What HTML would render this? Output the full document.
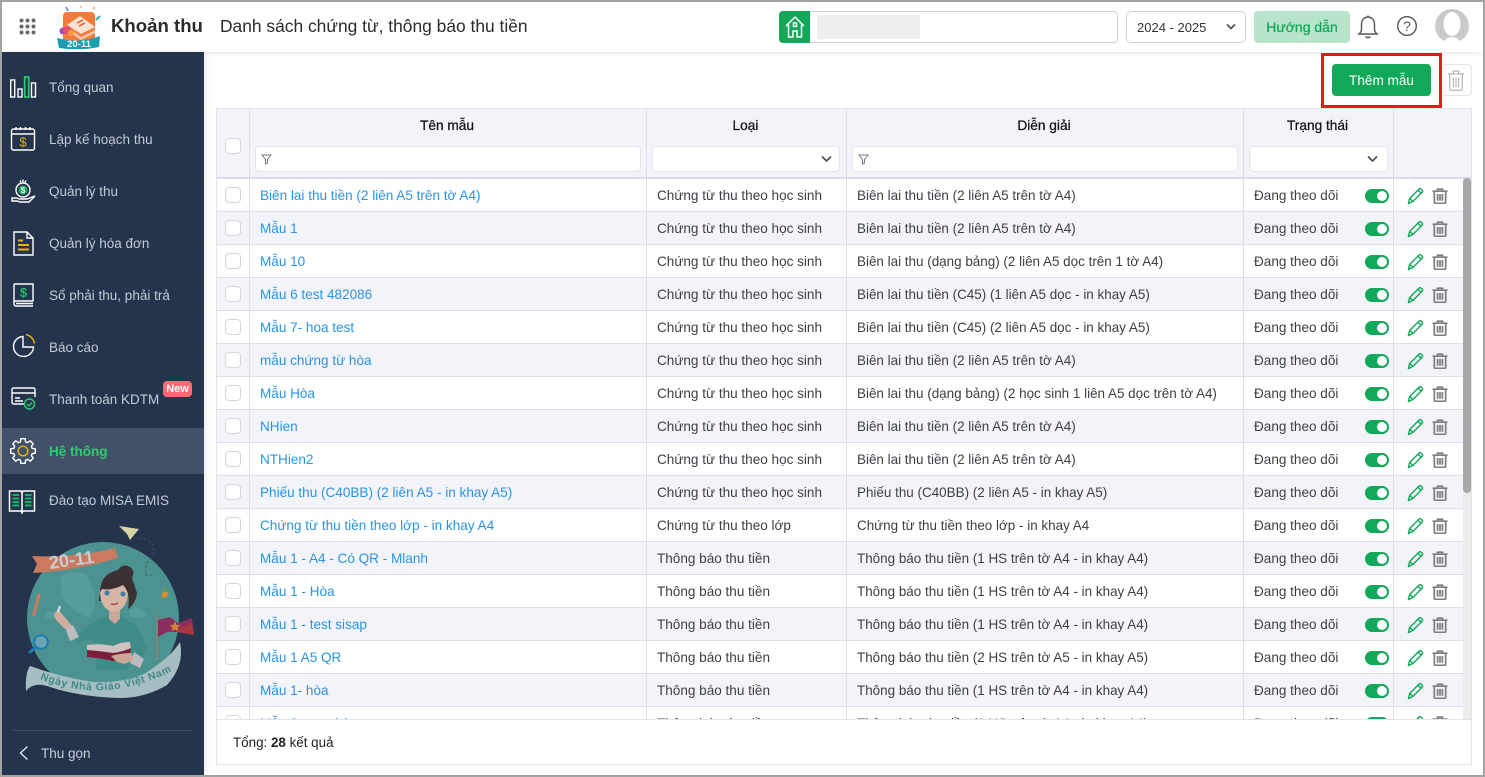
<!DOCTYPE html>
<html lang="vi"><head><meta charset="utf-8"><title>Khoản thu</title>
<style>
*{box-sizing:border-box}
html,body{margin:0;padding:0;width:1485px;height:777px;overflow:hidden;background:#fff}
body{font-family:"Liberation Sans","Noto Sans CJK SC",sans-serif;font-size:13px;color:#333;position:relative}
.a{position:absolute}
.frame{left:0;top:0;width:1485px;height:777px;border:2px solid #a3a3a3;pointer-events:none;z-index:50}
.hdr{left:2px;top:2px;width:1481px;height:50px;background:#fff;box-shadow:0 1px 5px rgba(0,0,0,.1);z-index:5}
.side{left:2px;top:52px;width:202px;height:723px;background:#24344d;box-shadow:2px 0 6px rgba(0,0,0,.08);z-index:6}
.mi{position:absolute;left:47px;color:#c3cbd4;font-size:13.5px;line-height:22px;white-space:nowrap}
.ic{position:absolute;fill:none;stroke:#fff;stroke-width:1.4}
.inp{background:#fff;border:1px solid #e3e5ea;border-radius:4px}
.th{background:#f3f4f9;border-right:1px solid #dcdfe8;border-bottom:2px solid #dcdfe8;top:109px;height:70px}
.tt{top:116px;text-align:center;color:#111;font-size:13.7px;line-height:19px;-webkit-text-stroke:.25px #111}
.cb{position:absolute;left:8px;width:16px;height:16px;background:#fff;border:1px solid #d4d6dc;border-radius:4px}
#body{left:217px;top:179px;width:1246px;height:540px;overflow:hidden}
.r{position:relative;height:33px;border-bottom:1px solid #dcdfe8;line-height:34px;white-space:nowrap;background:#fff}
.r:nth-child(even){background:#f3f4f9}
.r span{position:absolute;top:0;font-size:13.55px;color:#3c3f45}
.r .n{left:43px;color:#2a93e6}.r .l{left:440px}.r .d{left:640px;font-size:13.45px}.r .s{left:1037px}
.r i{position:absolute;top:0;height:33px;width:1px;background:#dcdfe8}
.r b{position:absolute;left:1148px;top:10px;width:24px;height:14px;border-radius:7px;background:#12a85a}
.r b:after{content:"";position:absolute;right:2px;top:2px;width:10px;height:10px;border-radius:50%;background:#fff}
.r svg{position:absolute;top:0;left:0;width:1246px;height:33px;pointer-events:none}
</style></head><body>
<svg width="0" height="0" style="position:absolute"><defs>
<symbol id="pen" viewBox="0 0 18 18"><path d="M1.5 17 2.8 11.6 12.6 1.8q1-1 2.1-.3l1.4 1.3q.9 1 0 2.1L6.3 14.7ZM2.8 11.600 6.3 14.7M11.6 2.900 15 6" fill="none" stroke="#12a85a" stroke-width="1.5" stroke-linejoin="round"/></symbol>
<symbol id="tr" viewBox="0 0 16 16"><path d="M.5 3.200H15.500M5.500 3V1.200H10.500V3M2.300 3.500V14q0 1.300 1.300 1.300H12.400q1.300 0 1.300-1.300V3.500M5.600 6V12.800M8 6V12.800M10.400 6V12.800" fill="none" stroke="#7d7d7d" stroke-width="1.7"/></symbol>
</defs></svg>

<!-- header -->
<div class="a hdr"></div>
<svg class="a" style="left:18.5px;top:17.5px;z-index:7" width="18" height="18"><g fill="#6a6a6a"><circle cx="2.500" cy="2.500" r="2"/><circle cx="8.500" cy="2.500" r="2"/><circle cx="14.500" cy="2.500" r="2"/><circle cx="2.500" cy="8.500" r="2"/><circle cx="8.500" cy="8.500" r="2"/><circle cx="14.500" cy="8.500" r="2"/><circle cx="2.500" cy="14.500" r="2"/><circle cx="8.500" cy="14.500" r="2"/><circle cx="14.500" cy="14.500" r="2"/></g></svg>
<svg class="a" style="left:55px;top:5px;z-index:7" width="50" height="45" viewBox="0 0 50 45">
<rect x="8" y="7" width="32" height="31" rx="4" fill="#f47a3a"/>
<path d="M12 20 25 11 40 22 26 29Z" fill="#fbe3d4"/><path d="M13 23 26 32 40 25 40 28 26 35 14 27Z" fill="#f9c9ae"/>
<path d="M22 18l6-3M24 21l6-3" stroke="#e4572e" stroke-width="1.5"/>
<circle cx="8" cy="26" r="3.500" fill="#a04fb0"/><circle cx="12" cy="25" r="4" fill="#e5536b"/><circle cx="16" cy="28" r="3" fill="#f5a040"/>
<circle cx="39" cy="3" r="1.300" fill="#f3b98d"/><circle cx="26" cy="2" r="1" fill="#f3b98d"/><path d="M11 2l2 4" stroke="#3a8fc4" stroke-width="1.500"/><path d="M41 15l4-4" stroke="#2bb4c2" stroke-width="2"/>
<path d="M2 33 Q25 39 45 31 L44 42 Q25 46 4 43Z" fill="#1a9db0"/>
<text x="24" y="42" text-anchor="middle" font-family="Liberation Sans" font-size="9.5" font-weight="700" fill="#fff">20-11</text>
</svg>
<div class="a" style="left:111px;top:13px;font-size:18.6px;font-weight:700;color:#2b2b2b;line-height:26px;z-index:7;white-space:nowrap">Khoản thu</div>
<div class="a" style="left:220px;top:14px;font-size:17.4px;color:#2b2b2b;line-height:24px;z-index:7;white-space:nowrap">Danh sách chứng từ, thông báo thu tiền</div>

<div class="a" style="left:779px;top:11px;width:339px;height:32px;border:1px solid #cfd1d6;border-radius:4px;background:#fff;z-index:7"></div>
<div class="a" style="left:779px;top:11px;width:31px;height:32px;background:#12a85a;border-radius:4px 0 0 4px;z-index:8"></div>
<svg class="a" style="left:785px;top:15px;z-index:9" width="20" height="24" viewBox="0 0 20 24" fill="none" stroke="#fff" stroke-width="1.500"><path d="M1 11 10 2l9 9M3.500 9.500V22H8V16H12V22H16.500V9.500"/><rect x="8.500" y="8" width="3" height="3.500"/></svg>
<div class="a" style="left:817px;top:15px;width:103px;height:24px;background:#eeeeee;z-index:8"></div>
<div class="a" style="left:1126px;top:11px;width:120px;height:32px;border:1px solid #cfd1d6;border-radius:5px;background:#fff;z-index:7;line-height:32px;padding-left:10px;font-size:13px;color:#333;white-space:nowrap">2024 - 2025</div>
<svg class="a" style="left:1226px;top:23px;z-index:8" width="10" height="8"><path d="M1 1.500 5 5.500 9 1.500" fill="none" stroke="#444a5c" stroke-width="1.600"/></svg>
<div class="a" style="left:1254px;top:11px;width:96px;height:32px;border-radius:4px;background:#b7e4ca;color:#12a85a;text-align:center;line-height:33px;font-size:14px;-webkit-text-stroke:.25px #12a85a;z-index:7;white-space:nowrap">Hướng dẫn</div>
<svg class="a" style="left:1357px;top:14px;z-index:7" width="22" height="26" viewBox="0 0 22 26" fill="none" stroke="#555" stroke-width="1.4"><path d="M2 20q2.500-2 2.500-5V10a6.500 7 0 0 1 13 0v5q0 3 2.500 5ZM8.500 22.500q2.500 2.500 5 0M11 3V1.500"/></svg>
<svg class="a" style="left:1396px;top:15px;z-index:7" width="22" height="22" viewBox="0 0 22 22"><circle cx="11" cy="11" r="9.300" fill="none" stroke="#555" stroke-width="1.4"/><text x="11" y="16" text-anchor="middle" font-family="Liberation Sans" font-size="14" fill="#555">?</text></svg>
<svg class="a" style="left:1435px;top:9px;z-index:7" width="34" height="34" viewBox="0 0 34 34"><circle cx="17" cy="17" r="17" fill="#c9c9c9"/><ellipse cx="17" cy="15" rx="8.500" ry="12" fill="#fff"/><path d="M7 34q10-12 20 0Z" fill="#fff"/></svg>

<!-- sidebar -->
<div class="a side">
  <div class="a" style="left:0;top:376px;width:202px;height:46px;background:#42516a"></div>
  <div class="mi" style="top:25px">Tổng quan</div>
  <div class="mi" style="top:77px">Lập kế hoạch thu</div>
  <div class="mi" style="top:129px">Quản lý thu</div>
  <div class="mi" style="top:181px">Quản lý hóa đơn</div>
  <div class="mi" style="top:233px">Sổ phải thu, phải trả</div>
  <div class="mi" style="top:285px">Báo cáo</div>
  <div class="mi" style="top:337px">Thanh toán KDTM</div>
  <div class="mi" style="top:389px;color:#2ecc71;font-weight:700">Hệ thống</div>
  <div class="mi" style="top:438px">Đào tạo MISA EMIS</div>
  <div class="a" style="left:161px;top:329px;width:29px;height:16px;background:#ff6b70;border-radius:4px;color:#fff;font-size:11px;font-weight:700;text-align:center;line-height:16px">New</div>
  <div class="a" style="left:9px;top:678px;width:181px;height:1px;background:#3c4b64"></div>
  <svg class="a" style="left:16px;top:693px" width="12" height="16"><path d="M9.500 1.500 2.500 8l7 6.500" fill="none" stroke="#d5dbe2" stroke-width="1.500"/></svg>
  <div class="mi" style="left:39px;top:691px;color:#c9d1d9">Thu gọn</div>

  <!-- icons -->
  <svg class="ic" style="left:8px;top:24px" width="28" height="24"><rect x=".7" y="4" width="4" height="17"/><rect x="8" y="13" width="4" height="8"/><rect x="14.700" y="1" width="4" height="20" stroke="#2ecc71" stroke-width="1.700"/><rect x="21.500" y="7" width="4" height="14"/></svg>
  <svg class="ic" style="left:8px;top:74px" width="28" height="26"><rect x="1.500" y="3" width="23" height="21" rx="2"/><path d="M1.500 8H24.500M6 1v3M10.500 1v3M15.500 1v3M20 1v3"/><text x="13" y="20.500" text-anchor="middle" font-family="Liberation Sans" font-size="13" fill="#e6b00a" stroke="none">$</text></svg>
  <svg class="ic" style="left:8px;top:126px" width="28" height="28"><circle cx="13" cy="12" r="7"/><circle cx="13" cy="12" r="4.600" fill="#16a85c" stroke="none"/><path d="M13 1.500v2.500M10 2.500 11 4.500M16 2.500 15 4.500M2 20h4l4 1h7l8-3-6 6H10l-3-1H2Z"/><text x="13" y="15" text-anchor="middle" font-family="Liberation Sans" font-size="8" font-weight="700" fill="#fff" stroke="none">$</text></svg>
  <svg class="ic" style="left:9px;top:178px" width="26" height="28"><path d="M3 2H16L22 8V25H3ZM16 2V8H22"/><path d="M7 10.500H12M7 15H18M7 19.500H18" stroke="#e6b00a" stroke-width="2"/></svg>
  <svg class="ic" style="left:10px;top:230px" width="26" height="28"><path d="M2 22V3q0-1 1-1H21V19H4q-2 0-2 2.500T4 24H21M4 21.500H21"/><text x="11.500" y="15" text-anchor="middle" font-family="Liberation Sans" font-size="13" font-weight="700" fill="#12c46b" stroke="none">$</text></svg>
  <svg class="ic" style="left:10px;top:281px" width="26" height="26"><path d="M11 3.500A10 10 0 1 0 21.500 14H11Z"/><path d="M14 1.500a11 11 0 0 1 8.500 9" stroke="#e6b00a" stroke-width="1.500"/></svg>
  <svg class="ic" style="left:8px;top:334px" width="30" height="28"><path d="M14 18H4q-2 0-2-2V4q0-2 2-2H23q2 0 2 2V11M2 7H25M5 12H10M5 15H13"/><circle cx="19.500" cy="18" r="5" stroke="#2ecc71"/><path d="M17 18l2 2 3-3.500" stroke="#2ecc71"/></svg>
  <svg class="ic" style="left:7px;top:385px" width="28" height="28" viewBox="0 0 28 28"><g transform="translate(14 14)"><path stroke-linejoin="round" d="M-2.620-9.130-2.170-12.310 2.170-12.310 2.620-9.130 4.600-8.310 7.170-10.240 10.240-7.170 8.310-4.600 9.130-2.620 12.310-2.170 12.310 2.170 9.130 2.620 8.310 4.600 10.240 7.170 7.170 10.240 4.600 8.310 2.620 9.130 2.170 12.310-2.170 12.310-2.620 9.130-4.600 8.310-7.170 10.240-10.240 7.170-8.310 4.600-9.130 2.620-12.310 2.170-12.310-2.170-9.130-2.620-8.310-4.600-10.240-7.170-7.170-10.240-4.600-8.310Z"/><circle r="4.800" stroke="#e6b00a" stroke-width="1.500"/></g></svg>
  <svg class="ic" style="left:6px;top:436px" width="28" height="26"><path d="M1.500 3H13L14 5 15 3H26.500V23H15L14 25 13 23H1.500ZM14 5V23" stroke-width="1.500"/><path d="M4.500 7H11M4.500 10.500H11M4.500 14H11M4.500 17.500H11M17 7H23.500M17 10.500H23.500M17 14H23.500M17 17.500H23.500" stroke="#12c46b" stroke-width="1.700"/></svg>

  <!-- illustration -->
  <svg class="a" style="left:18px;top:473px" width="180" height="180" viewBox="0 0 180 180">
    <circle cx="83" cy="93" r="76" fill="#4b9290"/>
    <path d="M40 52q12-8 25-3 8 12 10 22t-6 22Q50 85 42 72ZM110 84q12-4 18 7-8 3-18 1ZM25 88q10-4 16 4-8 4-16 0Z" fill="#569c9a"/>
    <path d="M99 1 119 4 110 15 107 9Z" fill="#d8d3a5"/><path d="M118 13q16 2 16 11t-8 14l-1 12 8 0" fill="none" stroke="#3d5a5a" stroke-dasharray="3 2" stroke-width=".8"/>
    <path d="M12 31Q55 33 95 23L98 33Q55 46 13 48L17 39Z" fill="#c97a5f"/>
    <text transform="translate(30 44) rotate(-8)" font-family="Liberation Sans" font-size="18" font-weight="700" fill="#c9cdd3">20-11</text>
    <path d="M53 112 80 93 90 91H100L117 100 127 123 122 137 110 132 108 144H75L80 122 70 113 58 118Z" fill="#3f8d88"/>
    <path d="M45 102 53 100 59 112 50 116ZM114 127 124 134 120 143 110 138Z" fill="#bcbcc0"/>
    <path d="M34 90q2-6 6-3l2 2 10 12-7 3-9-9Z" fill="#cfae9f"/><path d="M38 87 40 81" stroke="#d8d8d8" stroke-width="2.500"/>
    <path d="M89 84h11v10l-5 5-6-5Z" fill="#c9a797"/>
    <ellipse cx="94" cy="68" rx="14" ry="19" fill="#d6b5a5"/>
    <path d="M81 76Q76 50 98 45q4-6 10-4 8 3 4 12 4 12 5 15-1 10-9 16 3-16-5-24-12 6-21 4-3 4-3 12Z" fill="#3a2f31"/>
    <circle cx="87" cy="68" r="2.500" fill="#3a7fa8"/><circle cx="103" cy="69" r="2.500" fill="#3a7fa8"/><path d="M91 79q4 1 7-1" stroke="#a84a50" stroke-width="1.500" fill="none"/>
    <path d="M67 120q14-2 26 1 8-4 17-4l1 8q-10 2-18 3-14-2-26-2Z" fill="#cfc2c0"/>
    <path d="M67 125q14 1 26 3 9-1 18-5l-1 8q-10 5-17 5-13-3-26-4Z" fill="#7d1f3a"/>
    <path d="M91 131q10-3 20-3l3 6-9 5-8-2Z" fill="#cba898"/>
    <path d="M137 89V135" stroke="#b8746a" stroke-width="1"/>
    <path d="M138 95 150 92 158 98 172 93 174 110 157 107 147 107 138 112Z" fill="#8b2d5e"/>
    <path d="M157 104 172 98 174 110 157 107Z" fill="#a8363f"/>
    <path d="M155 96l1.500 4 4 0-3 2.500 1 4-3.500-2.200-3.500 2.200 1-4-3-2.500 4 0Z" fill="#d4853a"/>
    <path d="M12 90 18 68 21 69 15 91Z" fill="#c97a5f"/>
    <circle cx="21" cy="117" r="6.800" fill="#6da5b0" stroke="#1f7ab8" stroke-width="2"/><path d="M16 122 9 128" stroke="#1f7ab8" stroke-width="3"/>
    <path d="M143 66 149 68 146 73 141 72Z" fill="#d2902f"/><path d="M145 66V61M147 67l2-4" stroke="#5c9a68" stroke-width="1.500"/>
    <path d="M6 166Q5 148 10 141 40 152 73 157 115 158 133 143 152 130 160 117 165 140 147 160 125 173 100 173 60 172 30 162 14 156 6 166Z" fill="#a6bdc2"/>
    <path id="rb" d="M20 154Q85 180 152 146" fill="none" stroke="none"/>
    <text font-family="Liberation Sans" font-size="10.500" font-weight="700" fill="#3f8a86" letter-spacing=".65"><textPath href="#rb">Ngày Nhà Giáo Việt Nam</textPath></text>
  </svg>
</div>

<!-- toolbar -->
<div class="a" style="left:1332px;top:64px;width:99px;height:32px;background:#12a85a;border-radius:4px;color:#fff;text-align:center;line-height:33px;font-size:13.6px;z-index:7;white-space:nowrap">Thêm mẫu</div>
<div class="a" style="left:1440px;top:64px;width:32px;height:32px;border:1px solid #e6e6e6;border-radius:4px;background:#fff;z-index:6"></div>
<svg class="a" style="left:1447px;top:70px;z-index:7" width="18" height="21" viewBox="0 0 16 19"><path d="M.5 3.500H15.500M5.500 3V1H10.500V3M2.300 4V17q0 1.300 1.300 1.300H12.400q1.300 0 1.300-1.300V4M5.600 7V15.500M8 7V15.500M10.400 7V15.500" fill="none" stroke="#b5b5b5" stroke-width="1.100"/></svg>
<div class="a" style="left:1321px;top:53px;width:121px;height:55px;border:3px solid #e01b1b;z-index:8"></div>

<!-- table -->
<div class="a" style="left:216px;top:108px;width:1256px;height:657px;border:1px solid #e2e4e8;background:#fff"></div>
<div class="a th" style="left:217px;width:33px"></div>
<div class="a th" style="left:250px;width:397px"></div>
<div class="a th" style="left:647px;width:200px"></div>
<div class="a th" style="left:847px;width:397px"></div>
<div class="a th" style="left:1244px;width:150px"></div>
<div class="a th" style="left:1394px;width:77px;border-right:0"></div>
<div class="a tt" style="left:250px;width:394px">Tên mẫu</div>
<div class="a tt" style="left:647px;width:197px">Loại</div>
<div class="a tt" style="left:847px;width:394px">Diễn giải</div>
<div class="a tt" style="left:1244px;width:147px">Trạng thái</div>
<div class="cb" style="left:225px;top:138px"></div>
<div class="a inp" style="left:255px;top:146px;width:386px;height:26px"></div>
<div class="a inp" style="left:652px;top:146px;width:188px;height:26px"></div>
<div class="a inp" style="left:852px;top:146px;width:386px;height:26px"></div>
<div class="a inp" style="left:1249px;top:146px;width:139px;height:26px"></div>
<svg class="a" style="left:261px;top:154px" width="11" height="11"><path d="M1 1H10L6.500 5.500V9L4.500 10V5.500Z" fill="none" stroke="#777" stroke-width="1"/></svg>
<svg class="a" style="left:858px;top:154px" width="11" height="11"><path d="M1 1H10L6.500 5.500V9L4.500 10V5.500Z" fill="none" stroke="#777" stroke-width="1"/></svg>
<svg class="a" style="left:821px;top:155px" width="11" height="8"><path d="M1 1.500 5.500 6 10 1.500" fill="none" stroke="#444a5c" stroke-width="1.600"/></svg>
<svg class="a" style="left:1367px;top:155px" width="11" height="8"><path d="M1 1.500 5.500 6 10 1.500" fill="none" stroke="#444a5c" stroke-width="1.600"/></svg>

<div class="a" id="body">
<div class="r"><div class="cb" style="top:8px"></div><i style="left:32px"></i><i style="left:429px"></i><i style="left:629px"></i><i style="left:1026px"></i><i style="left:1176px"></i><span class="n">Biên lai thu tiền (2 liên A5 trên tờ A4)</span><span class="l">Chứng từ thu theo học sinh</span><span class="d">Biên lai thu tiền (2 liên A5 trên tờ A4)</span><span class="s">Đang theo dõi</span><b></b><svg><use href="#pen" x="1190" y="8" width="17" height="18"/><use href="#tr" x="1215" y="9" width="16" height="16"/></svg></div>
<div class="r"><div class="cb" style="top:8px"></div><i style="left:32px"></i><i style="left:429px"></i><i style="left:629px"></i><i style="left:1026px"></i><i style="left:1176px"></i><span class="n">Mẫu 1</span><span class="l">Chứng từ thu theo học sinh</span><span class="d">Biên lai thu tiền (2 liên A5 trên tờ A4)</span><span class="s">Đang theo dõi</span><b></b><svg><use href="#pen" x="1190" y="8" width="17" height="18"/><use href="#tr" x="1215" y="9" width="16" height="16"/></svg></div>
<div class="r"><div class="cb" style="top:8px"></div><i style="left:32px"></i><i style="left:429px"></i><i style="left:629px"></i><i style="left:1026px"></i><i style="left:1176px"></i><span class="n">Mẫu 10</span><span class="l">Chứng từ thu theo học sinh</span><span class="d">Biên lai thu (dạng bảng) (2 liên A5 dọc trên 1 tờ A4)</span><span class="s">Đang theo dõi</span><b></b><svg><use href="#pen" x="1190" y="8" width="17" height="18"/><use href="#tr" x="1215" y="9" width="16" height="16"/></svg></div>
<div class="r"><div class="cb" style="top:8px"></div><i style="left:32px"></i><i style="left:429px"></i><i style="left:629px"></i><i style="left:1026px"></i><i style="left:1176px"></i><span class="n">Mẫu 6 test 482086</span><span class="l">Chứng từ thu theo học sinh</span><span class="d">Biên lai thu tiền (C45) (1 liên A5 dọc - in khay A5)</span><span class="s">Đang theo dõi</span><b></b><svg><use href="#pen" x="1190" y="8" width="17" height="18"/><use href="#tr" x="1215" y="9" width="16" height="16"/></svg></div>
<div class="r"><div class="cb" style="top:8px"></div><i style="left:32px"></i><i style="left:429px"></i><i style="left:629px"></i><i style="left:1026px"></i><i style="left:1176px"></i><span class="n">Mẫu 7- hoa test</span><span class="l">Chứng từ thu theo học sinh</span><span class="d">Biên lai thu tiền (C45) (2 liên A5 dọc - in khay A5)</span><span class="s">Đang theo dõi</span><b></b><svg><use href="#pen" x="1190" y="8" width="17" height="18"/><use href="#tr" x="1215" y="9" width="16" height="16"/></svg></div>
<div class="r"><div class="cb" style="top:8px"></div><i style="left:32px"></i><i style="left:429px"></i><i style="left:629px"></i><i style="left:1026px"></i><i style="left:1176px"></i><span class="n">mẫu chứng từ hòa</span><span class="l">Chứng từ thu theo học sinh</span><span class="d">Biên lai thu tiền (2 liên A5 trên tờ A4)</span><span class="s">Đang theo dõi</span><b></b><svg><use href="#pen" x="1190" y="8" width="17" height="18"/><use href="#tr" x="1215" y="9" width="16" height="16"/></svg></div>
<div class="r"><div class="cb" style="top:8px"></div><i style="left:32px"></i><i style="left:429px"></i><i style="left:629px"></i><i style="left:1026px"></i><i style="left:1176px"></i><span class="n">Mẫu Hòa</span><span class="l">Chứng từ thu theo học sinh</span><span class="d">Biên lai thu (dạng bảng) (2 học sinh 1 liên A5 dọc trên tờ A4)</span><span class="s">Đang theo dõi</span><b></b><svg><use href="#pen" x="1190" y="8" width="17" height="18"/><use href="#tr" x="1215" y="9" width="16" height="16"/></svg></div>
<div class="r"><div class="cb" style="top:8px"></div><i style="left:32px"></i><i style="left:429px"></i><i style="left:629px"></i><i style="left:1026px"></i><i style="left:1176px"></i><span class="n">NHien</span><span class="l">Chứng từ thu theo học sinh</span><span class="d">Biên lai thu tiền (2 liên A5 trên tờ A4)</span><span class="s">Đang theo dõi</span><b></b><svg><use href="#pen" x="1190" y="8" width="17" height="18"/><use href="#tr" x="1215" y="9" width="16" height="16"/></svg></div>
<div class="r"><div class="cb" style="top:8px"></div><i style="left:32px"></i><i style="left:429px"></i><i style="left:629px"></i><i style="left:1026px"></i><i style="left:1176px"></i><span class="n">NTHien2</span><span class="l">Chứng từ thu theo học sinh</span><span class="d">Biên lai thu tiền (2 liên A5 trên tờ A4)</span><span class="s">Đang theo dõi</span><b></b><svg><use href="#pen" x="1190" y="8" width="17" height="18"/><use href="#tr" x="1215" y="9" width="16" height="16"/></svg></div>
<div class="r"><div class="cb" style="top:8px"></div><i style="left:32px"></i><i style="left:429px"></i><i style="left:629px"></i><i style="left:1026px"></i><i style="left:1176px"></i><span class="n">Phiếu thu (C40BB) (2 liên A5 - in khay A5)</span><span class="l">Chứng từ thu theo học sinh</span><span class="d">Phiếu thu (C40BB) (2 liên A5 - in khay A5)</span><span class="s">Đang theo dõi</span><b></b><svg><use href="#pen" x="1190" y="8" width="17" height="18"/><use href="#tr" x="1215" y="9" width="16" height="16"/></svg></div>
<div class="r"><div class="cb" style="top:8px"></div><i style="left:32px"></i><i style="left:429px"></i><i style="left:629px"></i><i style="left:1026px"></i><i style="left:1176px"></i><span class="n">Chứng từ thu tiền theo lớp - in khay A4</span><span class="l">Chứng từ thu theo lớp</span><span class="d">Chứng từ thu tiền theo lớp - in khay A4</span><span class="s">Đang theo dõi</span><b></b><svg><use href="#pen" x="1190" y="8" width="17" height="18"/><use href="#tr" x="1215" y="9" width="16" height="16"/></svg></div>
<div class="r"><div class="cb" style="top:8px"></div><i style="left:32px"></i><i style="left:429px"></i><i style="left:629px"></i><i style="left:1026px"></i><i style="left:1176px"></i><span class="n">Mẫu 1 - A4 - Có QR - Mlanh</span><span class="l">Thông báo thu tiền</span><span class="d">Thông báo thu tiền (1 HS trên tờ A4 - in khay A4)</span><span class="s">Đang theo dõi</span><b></b><svg><use href="#pen" x="1190" y="8" width="17" height="18"/><use href="#tr" x="1215" y="9" width="16" height="16"/></svg></div>
<div class="r"><div class="cb" style="top:8px"></div><i style="left:32px"></i><i style="left:429px"></i><i style="left:629px"></i><i style="left:1026px"></i><i style="left:1176px"></i><span class="n">Mẫu 1 - Hòa</span><span class="l">Thông báo thu tiền</span><span class="d">Thông báo thu tiền (1 HS trên tờ A4 - in khay A4)</span><span class="s">Đang theo dõi</span><b></b><svg><use href="#pen" x="1190" y="8" width="17" height="18"/><use href="#tr" x="1215" y="9" width="16" height="16"/></svg></div>
<div class="r"><div class="cb" style="top:8px"></div><i style="left:32px"></i><i style="left:429px"></i><i style="left:629px"></i><i style="left:1026px"></i><i style="left:1176px"></i><span class="n">Mẫu 1 - test sisap</span><span class="l">Thông báo thu tiền</span><span class="d">Thông báo thu tiền (1 HS trên tờ A4 - in khay A4)</span><span class="s">Đang theo dõi</span><b></b><svg><use href="#pen" x="1190" y="8" width="17" height="18"/><use href="#tr" x="1215" y="9" width="16" height="16"/></svg></div>
<div class="r"><div class="cb" style="top:8px"></div><i style="left:32px"></i><i style="left:429px"></i><i style="left:629px"></i><i style="left:1026px"></i><i style="left:1176px"></i><span class="n">Mẫu 1 A5 QR</span><span class="l">Thông báo thu tiền</span><span class="d">Thông báo thu tiền (2 HS trên tờ A5 - in khay A5)</span><span class="s">Đang theo dõi</span><b></b><svg><use href="#pen" x="1190" y="8" width="17" height="18"/><use href="#tr" x="1215" y="9" width="16" height="16"/></svg></div>
<div class="r"><div class="cb" style="top:8px"></div><i style="left:32px"></i><i style="left:429px"></i><i style="left:629px"></i><i style="left:1026px"></i><i style="left:1176px"></i><span class="n">Mẫu 1- hòa</span><span class="l">Thông báo thu tiền</span><span class="d">Thông báo thu tiền (1 HS trên tờ A4 - in khay A4)</span><span class="s">Đang theo dõi</span><b></b><svg><use href="#pen" x="1190" y="8" width="17" height="18"/><use href="#tr" x="1215" y="9" width="16" height="16"/></svg></div>
<div class="r"><div class="cb" style="top:8px"></div><i style="left:32px"></i><i style="left:429px"></i><i style="left:629px"></i><i style="left:1026px"></i><i style="left:1176px"></i><span class="n">Mẫu 2 - test hòa</span><span class="l">Thông báo thu tiền</span><span class="d">Thông báo thu tiền (1 HS trên tờ A4 - in khay A4)</span><span class="s">Đang theo dõi</span><b></b><svg><use href="#pen" x="1190" y="8" width="17" height="18"/><use href="#tr" x="1215" y="9" width="16" height="16"/></svg></div>
</div>
<div class="a" style="left:1463px;top:179px;width:8px;height:540px;background:#ececec"></div>
<div class="a" style="left:1463px;top:178px;width:8px;height:315px;background:#a8a8a8;border-radius:4px"></div>
<div class="a" style="left:217px;top:719px;width:1254px;height:1px;background:#e2e4e8"></div>
<div class="a" style="left:233px;top:734px;font-size:13.4px;color:#222;line-height:18px;white-space:nowrap">Tổng: <strong>28</strong> kết quả</div>
<div class="a frame"></div>
</body></html>
